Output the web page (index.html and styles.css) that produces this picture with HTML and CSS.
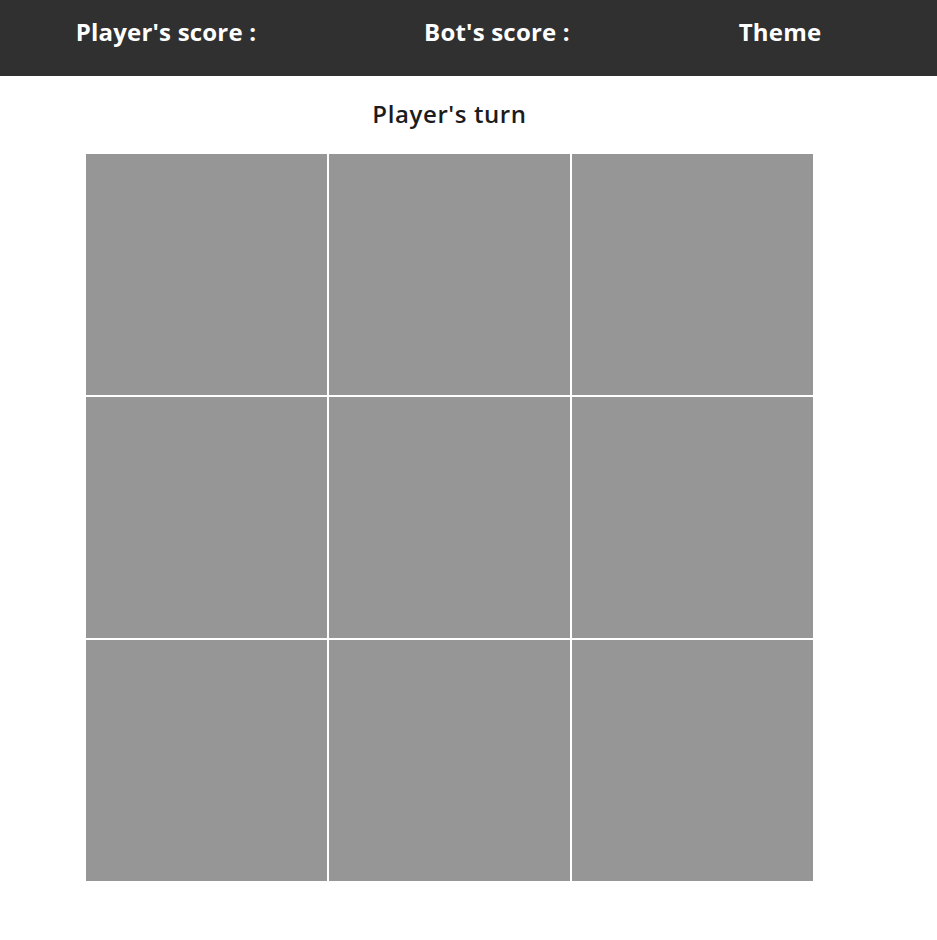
FILE: index.html
```html
<!DOCTYPE html>
<html lang="en">
<head>
<meta charset="utf-8">
<title>Tic Tac Toe</title>
<link rel="stylesheet" href="styles.css">
</head>
<body>
<header class="topbar">
  <div class="topbar-item">Player's score :</div>
  <div class="topbar-item">Bot's score :</div>
  <div class="topbar-item">Theme</div>
</header>
<main class="game">
  <div class="turn">Player's turn</div>
  <div class="board">
    <div class="cell"></div>
    <div class="cell"></div>
    <div class="cell"></div>
    <div class="cell"></div>
    <div class="cell"></div>
    <div class="cell"></div>
    <div class="cell"></div>
    <div class="cell"></div>
    <div class="cell"></div>
  </div>
</main>
</body>
</html>
```
FILE: styles.css
```css
html, body {
  margin: 0;
  padding: 0;
  background: #ffffff;
  font-family: "Open Sans", "Liberation Sans", sans-serif;
}

.topbar {
  height: 76px;
  background: #303030;
  color: #ffffff;
  display: grid;
  grid-template-columns: 332px 330px 236px;
  align-items: center;
  padding-bottom: 12px;
  box-sizing: border-box;
}

.topbar-item {
  text-align: center;
  font-size: 24px;
  font-weight: 700;
  line-height: 30px;
  letter-spacing: 0.2px;
}

.game {
  width: 899px;
  display: flex;
  flex-direction: column;
  align-items: center;
}

.turn {
  font-size: 24px;
  font-weight: 600;
  color: #1c1c1c;
  line-height: 30px;
  letter-spacing: 0.6px;
  margin-top: 23px;
}

.board {
  margin-top: 25px;
  display: grid;
  grid-template-columns: repeat(3, 241px);
  grid-template-rows: repeat(3, 241px);
  gap: 2px;
}

.cell {
  background: #969696;
}
```
